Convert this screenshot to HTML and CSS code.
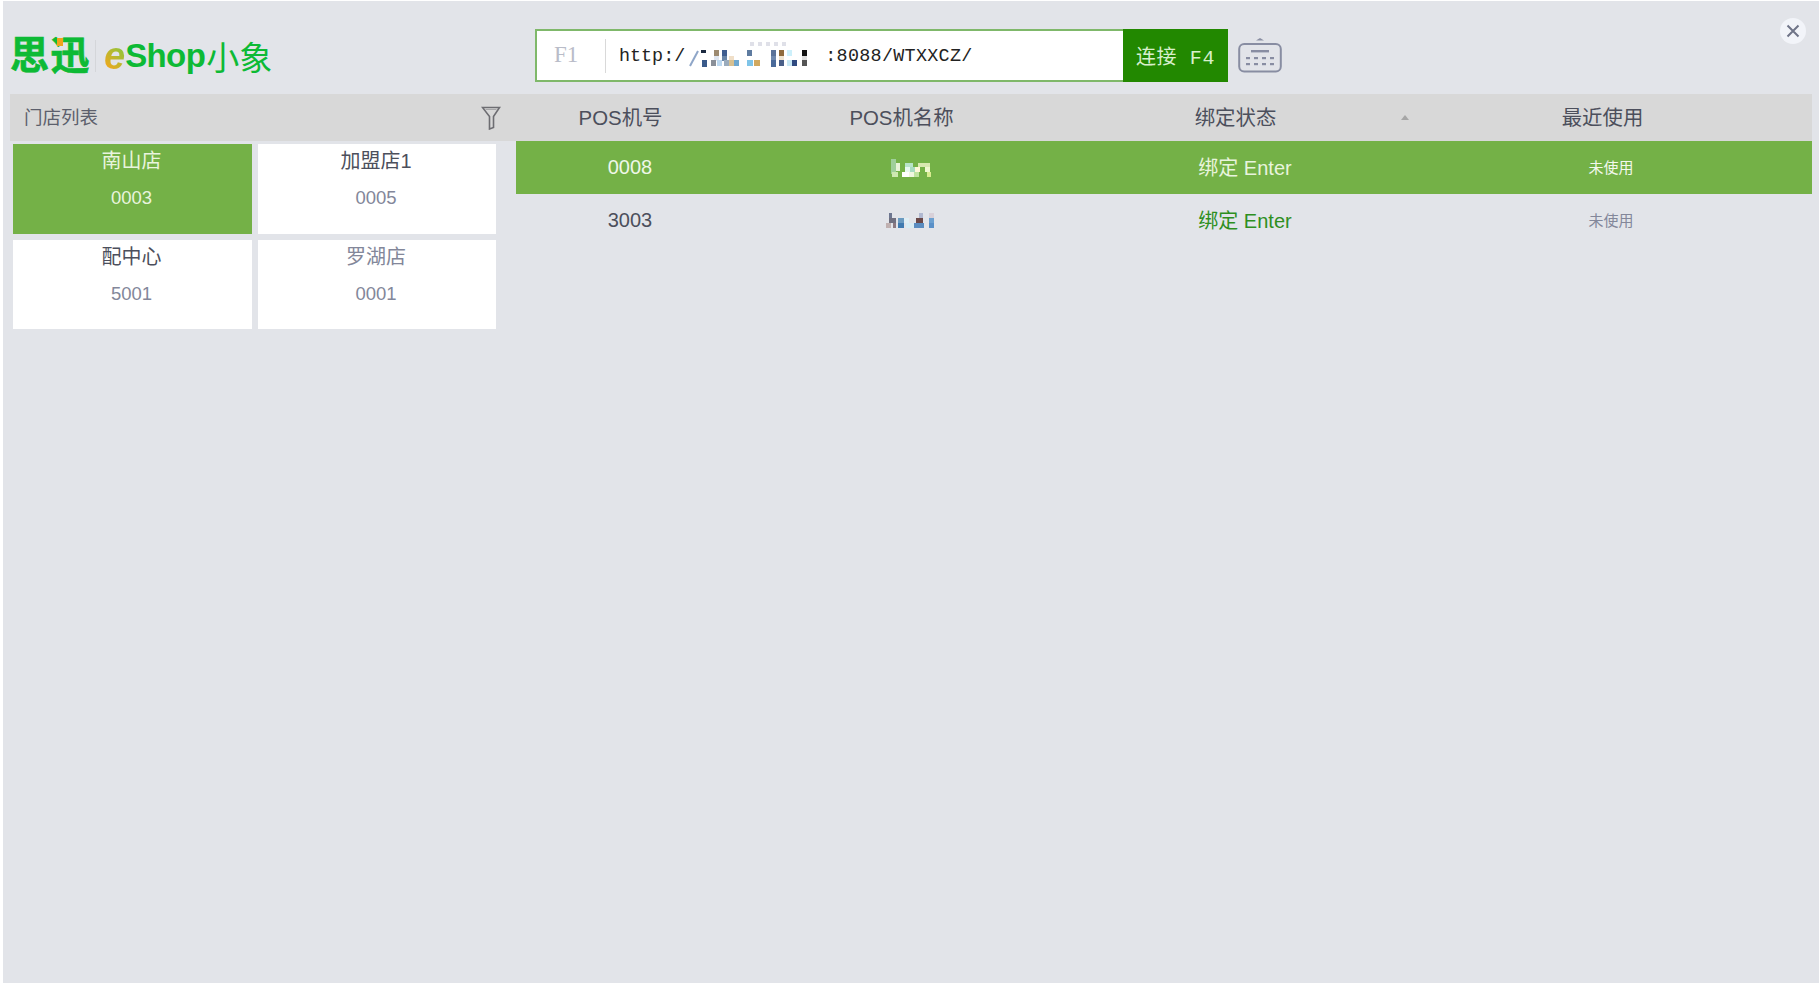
FILE: index.html
```html
<!DOCTYPE html>
<html lang="zh-CN">
<head>
  <meta charset="UTF-8" />
  <title>思迅 eShop小象</title>
  <link rel="stylesheet" href="styles.css">
</head>
<body>
  <div class="app">
    <button class="close-btn">
      <svg width="14" height="14" viewBox="0 0 14 14"><path d="M1.5 1.5l11 11M12.5 1.5l-11 11" stroke="#6f7488" stroke-width="2" fill="none"/></svg>
    </button>

    <div class="topbar">
      <div class="logo">
        <span class="logo-sx">思迅<i class="logo-dot"></i></span>
        <span class="logo-line"></span>
        <span class="logo-e">e</span><span class="logo-shop">Shop</span><span class="logo-cn">小象</span>
      </div>

      <div class="connect">
        <span class="connect-key">F1</span>
        <div class="connect-url">
          <span>http:/</span>
          <svg class="url-mask" width="136" height="30" viewBox="0 0 136 30">
            <path d="M1 24L9 9" stroke="#8fa6c8" stroke-width="2"/>
            <g fill="#dfe0e8">
              <rect x="61" y="0" width="4" height="4"/><rect x="69" y="0" width="4" height="4"/><rect x="77" y="0" width="4" height="4"/><rect x="85" y="0" width="4" height="4"/><rect x="93" y="0" width="4" height="4"/>
            </g>
            <rect x="12" y="8" width="5" height="3" fill="#1c2a40"/>
            <rect x="25" y="8" width="5" height="6" fill="#9c8a70"/><rect x="33" y="8" width="5" height="6" fill="#3f5d8f"/>
            <rect x="58" y="8" width="5" height="6" fill="#5e7ba0"/><rect x="82" y="8" width="5" height="6" fill="#5a7298"/>
            <rect x="90" y="8" width="5" height="6" fill="#8f6a3c"/><rect x="98" y="8" width="5" height="6" fill="#cdf0fb"/>
            <rect x="113" y="8" width="5" height="6" fill="#111"/>
            <rect x="25" y="14" width="5" height="5" fill="#dfe6f0"/><rect x="33" y="14" width="5" height="5" fill="#6a86a8"/>
            <rect x="40" y="14" width="5" height="5" fill="#f0dfc8"/><rect x="82" y="14" width="5" height="5" fill="#6f88ad"/>
            <rect x="90" y="14" width="5" height="5" fill="#f0e4d0"/><rect x="113" y="14" width="5" height="5" fill="#ddd"/>
            <rect x="13" y="18" width="5" height="7" fill="#3a5a8a"/><rect x="22" y="18" width="5" height="6" fill="#8a8f98"/>
            <rect x="28" y="18" width="5" height="6" fill="#bcd8f0"/><rect x="35" y="18" width="5" height="6" fill="#9aabbc"/>
            <rect x="40" y="18" width="5" height="6" fill="#d8c090"/><rect x="45" y="18" width="5" height="6" fill="#6fa8d0"/>
            <rect x="58" y="18" width="6" height="6" fill="#7fc4e8"/><rect x="65" y="18" width="6" height="6" fill="#d0a860"/>
            <rect x="82" y="18" width="5" height="7" fill="#4a6a9a"/><rect x="90" y="18" width="5" height="6" fill="#4a5f88"/>
            <rect x="98" y="18" width="5" height="6" fill="#c8e8f5"/><rect x="103" y="18" width="5" height="6" fill="#2f4a80"/>
            <rect x="113" y="18" width="5" height="6" fill="#555"/>
          </svg>
          <span class="url-tail">:8088/WTXXCZ/</span>
        </div>
        <button class="connect-btn">连接 F4</button>
      </div>

      <svg class="keyboard" width="44" height="36" viewBox="0 0 44 36" fill="none">
        <path d="M18 3.5h8L22 1z" fill="#8a8fa3"/>
        <rect x="1.2" y="7" width="41.6" height="27.6" rx="5" stroke="#888da2" stroke-width="2"/>
        <rect x="13" y="13" width="18" height="2.4" fill="#888da2"/>
        <g fill="#888da2">
          <rect x="8" y="20" width="4" height="2.2"/><rect x="16" y="20" width="4" height="2.2"/><rect x="24" y="20" width="4" height="2.2"/><rect x="32" y="20" width="4" height="2.2"/>
          <rect x="8" y="26" width="4" height="2.2"/><rect x="16" y="26" width="4" height="2.2"/><rect x="24" y="26" width="4" height="2.2"/><rect x="32" y="26" width="4" height="2.2"/>
        </g>
      </svg>
    </div>

    <div class="main">
      <div class="stores">
        <div class="stores-head">
          <span>门店列表</span>
          <svg width="20" height="24" viewBox="0 0 20 24" fill="none">
            <path d="M1.5 1.5h17l-6 9v11l-4 1.5v-12.5z" stroke="#6d6d72" stroke-width="1.6"/>
            <path d="M4.5 3.5h11" stroke="#a8a8aa" stroke-width="1"/>
          </svg>
        </div>
        <div class="store-grid">
          <div class="store-card active"><div class="store-name">南山店</div><div class="store-code">0003</div></div>
          <div class="store-card"><div class="store-name">加盟店1</div><div class="store-code">0005</div></div>
          <div class="store-card"><div class="store-name">配中心</div><div class="store-code">5001</div></div>
          <div class="store-card"><div class="store-name muted">罗湖店</div><div class="store-code">0001</div></div>
        </div>
      </div>

      <div class="pos">
        <div class="pos-row pos-head">
          <div>POS机号</div>
          <div>POS机名称</div>
          <div class="sort-col">绑定状态<i class="sort-arrow"></i></div>
          <div>最近使用</div>
        </div>
        <div class="pos-row selected">
          <div>0008</div>
          <div>
            <svg class="name-mask" width="42" height="18" viewBox="0 0 42 18">
              <rect x="1" y="0" width="5" height="15" fill="#9fcf9a"/><rect x="6" y="4" width="4" height="8" fill="#e8f4d8"/>
              <rect x="2" y="13" width="6" height="5" fill="#cde8b0"/><rect x="15" y="4" width="8" height="4" fill="#b8e4c8"/>
              <rect x="15" y="8" width="5" height="5" fill="#e8f8f0"/><rect x="20" y="8" width="5" height="5" fill="#a8dcc0"/>
              <rect x="25" y="8" width="5" height="5" fill="#fff8d8"/><rect x="28" y="4" width="12" height="4" fill="#d8e8b0"/>
              <rect x="35" y="8" width="5" height="5" fill="#f0f8d0"/><rect x="12" y="13" width="7" height="5" fill="#fff"/>
              <rect x="19" y="13" width="5" height="5" fill="#f0f8e0"/><rect x="24" y="13" width="5" height="5" fill="#c0e4a0"/>
              <rect x="37" y="13" width="4" height="5" fill="#d8ec90"/>
            </svg>
          </div>
          <div class="bind">绑定 Enter</div>
          <div class="last-used">未使用</div>
        </div>
        <div class="pos-row">
          <div>3003</div>
          <div>
            <svg class="name-mask" width="50" height="15" viewBox="0 0 50 15">
              <rect x="3" y="0" width="3" height="5" fill="#6d7690"/><rect x="33" y="0" width="4" height="5" fill="#b0b8d0"/>
              <rect x="43" y="0" width="5" height="5" fill="#d8d0d8"/><rect x="3" y="5" width="7" height="5" fill="#707080"/>
              <rect x="12" y="5" width="6" height="5" fill="#6a9ac0"/><rect x="18" y="5" width="5" height="5" fill="#e0eef4"/>
              <rect x="30" y="5" width="7" height="5" fill="#6a4848"/><rect x="43" y="5" width="5" height="5" fill="#6ca0d0"/>
              <rect x="0" y="10" width="5" height="5" fill="#c0b0b0"/><rect x="7" y="10" width="3" height="5" fill="#8a7880"/>
              <rect x="12" y="10" width="6" height="5" fill="#3f7ab0"/><rect x="20" y="10" width="8" height="5" fill="#d8ecf4"/>
              <rect x="28" y="10" width="10" height="5" fill="#5a8cc0"/><rect x="43" y="10" width="5" height="5" fill="#5a90c8"/>
            </svg>
          </div>
          <div class="bind">绑定 Enter</div>
          <div class="last-used">未使用</div>
        </div>
      </div>
    </div>
  </div>
</body>
</html>
```

FILE: styles.css
```css
* {
  box-sizing: border-box;
}

body {
  margin: 0;
  background: #fff;
  font-family: "Liberation Sans", "Noto Sans CJK SC", sans-serif;
  color: #4f5364;
}

.app {
  position: relative;
  height: 982px;
  margin: 1px 0 0 3px;
  padding: 0 6px 0 7px;
  background: #e2e4e9;
}

.close-btn {
  position: absolute;
  top: 17px;
  right: 13px;
  width: 26px;
  height: 26px;
  padding: 0;
  border: none;
  border-radius: 50%;
  background: #f2f4f9;
  display: flex;
  align-items: center;
  justify-content: center;
}

.topbar {
  height: 93px;
  display: flex;
  align-items: flex-start;
}

.logo {
  width: 525px;
  height: 40px;
  margin-top: 35px;
  display: flex;
  align-items: center;
  color: #0dba35;
  white-space: nowrap;
}

.logo-sx {
  position: relative;
  font-size: 39px;
  font-weight: 700;
  line-height: 40px;
  letter-spacing: 1.5px;
  -webkit-text-stroke: 0.7px #0dba35;
}

.logo-dot {
  position: absolute;
  left: 47px;
  top: 2px;
  width: 6px;
  height: 8px;
  background: #f0a31c;
}

.logo-line {
  width: 1px;
  height: 32px;
  margin: 0 8px 0 4px;
  background: #d4d6da;
}

.logo-e {
  font-size: 38px;
  font-style: italic;
  font-weight: 700;
  background: linear-gradient(45deg, #e8aa20 25%, #8fc43a 75%);
  -webkit-background-clip: text;
  background-clip: text;
  color: transparent;
}

.logo-shop {
  font-size: 33px;
  font-weight: 700;
  letter-spacing: -0.6px;
}

.logo-cn {
  font-size: 33px;
  margin-left: 1px;
}

.connect {
  width: 693px;
  height: 53px;
  margin-top: 28px;
  display: flex;
  align-items: center;
  background: #fff;
  border: 2px solid #7fb86a;
}

.connect-key {
  width: 69px;
  height: 34px;
  padding-left: 17px;
  border-right: 1px solid #d9d9d9;
  font-family: "Liberation Serif", serif;
  font-size: 23px;
  line-height: 32px;
  color: #b9bcc8;
}

.connect-url {
  flex: 1;
  padding: 1px 0 0 13px;
  display: flex;
  align-items: center;
  font-family: "Liberation Mono", monospace;
  font-size: 18.4px;
  color: #222;
}

.url-mask {
  flex: none;
  margin: 0 0 -2px 4px;
  filter: blur(0.5px);
}

.url-tail {
  letter-spacing: 0.3px;
}

.connect-btn {
  width: 105px;
  height: 53px;
  margin-right: -2px;
  padding: 0;
  border: none;
  background: #228800;
  color: #d8efcc;
  font-family: "Liberation Mono", "Noto Sans CJK SC", monospace;
  font-size: 20px;
  letter-spacing: 0.6px;
}

.keyboard {
  margin: 36px 0 0 10px;
}

.main {
  display: flex;
  align-items: flex-start;
}

.stores {
  width: 506px;
}

.stores-head {
  height: 47px;
  padding: 0 15px 3px 14px;
  display: flex;
  align-items: center;
  justify-content: space-between;
  background: #d8d8d8;
  font-size: 18.5px;
  color: #5c5f6c;
}

.stores-head svg {
  margin-top: 3px;
}

.store-grid {
  width: 486px;
  margin: 3px 0 0 3px;
  display: grid;
  grid-template-columns: 239px 238px;
  grid-template-rows: 90px 89px;
  gap: 6px;
}

.store-card {
  padding: 3px 2px 0 0;
  background: #fff;
  text-align: center;
}

.store-name {
  height: 31px;
  font-size: 20px;
  line-height: 29px;
  color: #4c4f5c;
}

.store-name.muted {
  color: #83879a;
}

.store-code {
  margin-top: 8px;
  font-size: 18.5px;
  line-height: 24px;
  color: #83879a;
}

.store-card.active {
  background: #74b147;
}

.active .store-name,
.active .store-code {
  color: #e8f4dd;
}

.pos {
  width: 1296px;
}

.pos-row {
  height: 53px;
  display: grid;
  grid-template-columns: 228px 334px 334px 400px;
  align-items: center;
  text-align: center;
  font-size: 20px;
  color: #4c4f5c;
}

.pos-head {
  height: 47px;
  padding-bottom: 4px;
  background: #d8d8d8;
  font-size: 20.4px;
}

.pos-head > div {
  position: relative;
  padding-right: 19px;
}

.sort-arrow {
  position: absolute;
  top: 50%;
  left: 323px;
  margin-top: -1px;
  border: 4px solid transparent;
  border-top: 0;
  border-bottom: 5px solid #a6a6a6;
}

.pos-row.selected {
  background: #74b147;
  color: #eff7e8;
}

.bind {
  padding-bottom: 2px;
  color: #2e8f1e;
}

.selected .bind {
  color: #e8f4dd;
}

.last-used {
  padding: 0 2px 2px 0;
  font-size: 15px;
  color: #83879a;
}

.selected .last-used {
  color: #f2f8ec;
}

.name-mask {
  vertical-align: middle;
  margin-bottom: 2px;
  filter: blur(0.5px);
}
```
